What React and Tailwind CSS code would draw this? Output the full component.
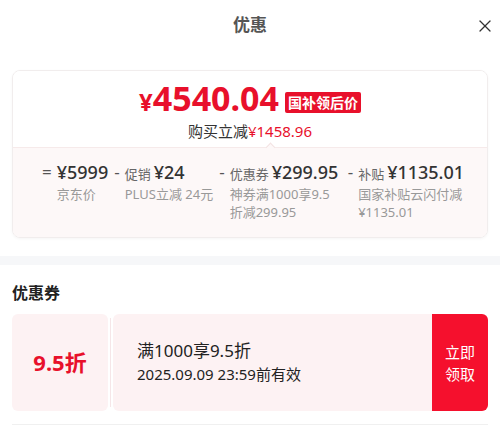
import { X } from 'lucide-react';

const font = { fontFamily: '"Noto Sans", "Noto Sans CJK SC", sans-serif' };

const PriceCol = ({ op, label, amount, sub }) => (
  <div className="flex items-start gap-[5px]">
    <span className="text-[17px] leading-[26px] text-[#555]">{op}</span>
    <div className="flex flex-col">
      <div className="flex items-baseline gap-[3px] whitespace-nowrap">
        {label && <span className="text-[13px] text-[#666]">{label}</span>}
        <span className="text-[18px] leading-[26px] font-medium text-[#333]">{amount}</span>
      </div>
      <div className="text-[13px] leading-[18px] text-[#999] max-w-[112px]">{sub}</div>
    </div>
  </div>
);

const App = () => {
  return (
    <div className="w-[500px] h-[428px] bg-white overflow-hidden" style={font}>
      {/* header */}
      <div className="relative h-[50px] flex items-center justify-center">
        <span className="text-[17px] font-bold text-[#555]">优惠</span>
        <X className="absolute right-[5px] top-[16px] text-[#333]" size={20} strokeWidth={1.5} />
      </div>

      {/* price card */}
      <div className="px-3 pt-[20px]">
        <div className="rounded-lg border border-[#f1eded] shadow-[0_1px_3px_rgba(0,0,0,0.04)] overflow-hidden">
          <div className="flex flex-col items-center pt-[12px] pb-[6px] bg-white">
            <div className="flex items-center gap-[6px] h-[36px]">
              <span className="text-[#e8102b] font-bold leading-[32px]">
                <span className="text-[24px]">¥</span>
                <span className="text-[34px]">4540.04</span>
              </span>
              <span className="bg-[#e8102b] text-white text-[14px] font-bold leading-[21px] px-[3px] rounded-[2px] mt-[3px]">
                国补领后价
              </span>
            </div>
            <div className="mt-[2px] text-[15px] leading-[20px] text-[#333]">
              购买立减<span className="text-[#e8102b]">¥1458.96</span>
            </div>
          </div>
          <div className="relative border-t border-[#f6eaea] bg-[#fdf8f8] pt-[11px] pb-[16px] pl-[29px] flex gap-[6px]">
            <span className="absolute left-[254px] -top-[4px] w-[7px] h-[7px] rotate-45 bg-[#fdf8f8] border-l border-t border-[#f3e3e3]"></span>
            <PriceCol op="=" amount="¥5999" sub="京东价" />
            <PriceCol op="-" label="促销" amount="¥24" sub="PLUS立减 24元" />
            <PriceCol op="-" label="优惠券" amount="¥299.95" sub="神券满1000享9.5折减299.95" />
            <PriceCol op="-" label="补贴" amount="¥1135.01" sub="国家补贴云闪付减¥1135.01" />
          </div>
        </div>
      </div>

      {/* gray band */}
      <div className="mt-[18px] h-[9px] bg-[#f6f7f9]"></div>

      {/* coupons */}
      <div className="px-3">
        <div className="pt-[17px] pb-[10px] text-[16px] font-bold text-[#222] leading-[22px]">优惠券</div>
        <div className="flex h-[97px]">
          <div className="relative w-[96px] rounded-md bg-[#fdf2f3] flex items-center justify-center">
            <span className="text-[22px] font-bold text-[#e8102b]">9.5折</span>
          </div>
          <div className="relative w-[5px] flex flex-col justify-between items-center">
            <span className="w-[7px] h-[4px] rounded-b-full bg-white"></span>
            <span className="flex-1 w-px bg-[#f6e6e8]"></span>
            <span className="w-[7px] h-[4px] rounded-t-full bg-white"></span>
          </div>
          <div className="flex-1 rounded-l-md bg-[#fdf2f3] flex flex-col justify-center pl-[24px] pb-[2px]">
            <span className="text-[17px] leading-[25px] text-[#222]">满1000享9.5折</span>
            <span className="text-[15px] leading-[23px] text-[#222]">2025.09.09 23:59前有效</span>
          </div>
          <div className="w-[56px] rounded-r-md bg-[#f5102d] flex items-center justify-center">
            <span className="text-[15px] leading-[22px] text-white text-center">立即<br />领取</span>
          </div>
        </div>
        <div className="mt-[13px] h-px bg-[#f0f0f0]"></div>
      </div>
    </div>
  );
};

export default App;
